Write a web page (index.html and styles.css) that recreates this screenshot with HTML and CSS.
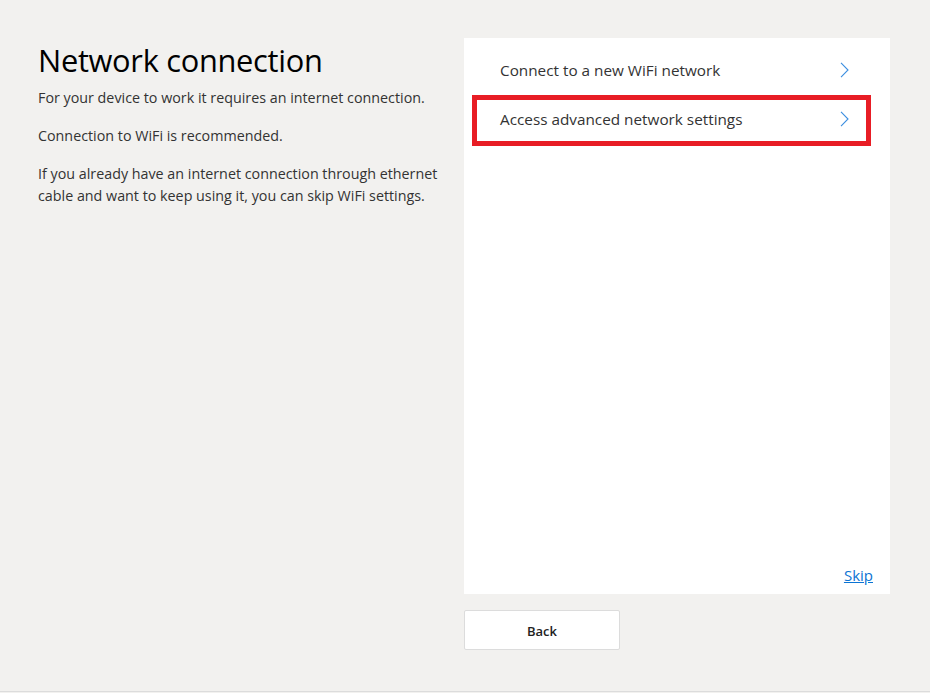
FILE: index.html
```html
<!DOCTYPE html>
<html lang="en">
<head>
<meta charset="utf-8">
<title>Network connection</title>
<link rel="stylesheet" href="styles.css">
</head>
<body>
<div class="page">
  <section class="intro">
    <h1 class="title">Network connection</h1>
    <p class="text first">For your device to work it requires an internet connection.</p>
    <p class="text">Connection to WiFi is recommended.</p>
    <p class="text">If you already have an internet connection through ethernet cable and want to keep using it, you can skip WiFi settings.</p>
  </section>
  <section class="side">
    <div class="panel">
      <ul class="options">
        <li class="option"><span class="label">Connect to a new WiFi network</span>
          <svg class="chev" width="9" height="16" viewBox="0 0 9 16"><path d="M1 0.8 L8 8 L1 15.2" fill="none" stroke="#3b8ee0" stroke-width="1.1"/></svg>
        </li>
        <li class="option highlighted"><span class="label">Access advanced network settings</span>
          <svg class="chev" width="9" height="16" viewBox="0 0 9 16"><path d="M1 0.8 L8 8 L1 15.2" fill="none" stroke="#3b8ee0" stroke-width="1.1"/></svg>
        </li>
      </ul>
      <div class="footer"><a class="skip" href="#">Skip</a></div>
    </div>
    <button class="back" type="button">Back</button>
  </section>
</div>
</body>
</html>
```
FILE: styles.css
```css
html, body {
  margin: 0;
  padding: 0;
}
body {
  background: #f2f1ef;
  font-family: "Open Sans", "Noto Sans", sans-serif;
  color: #2b2b2b;
}
.page {
  height: 692px;
  border-bottom: 1px solid #dcdcdc;
  display: flex;
  padding: 38px 0 0 38px;
  box-sizing: border-box;
  gap: 21px;
}
.intro {
  width: 405px;
}
.title {
  margin: 0;
  font-size: 30.8px;
  font-weight: 400;
  line-height: 44px;
  color: #000;
  letter-spacing: -0.3px;
}
.text {
  margin: 16px 0 0;
  font-size: 14.3px;
  line-height: 22px;
  color: #333;
}
.text.first {
  margin-top: 5px;
}
.side {
  width: 426px;
  display: flex;
  flex-direction: column;
  gap: 16px;
}
.panel {
  background: #fff;
  height: 556px;
  display: flex;
  flex-direction: column;
  padding-top: 7px;
  box-sizing: border-box;
}
.options {
  list-style: none;
  margin: 0;
  padding: 0;
}
.option {
  position: relative;
  height: 49px;
  display: flex;
  align-items: center;
  justify-content: space-between;
  padding: 0 41px 0 36px;
  font-size: 15.3px;
  color: #333;
}
.chev {
  display: block;
  margin-top: 1px;
}
.highlighted::after {
  content: "";
  position: absolute;
  top: 1px;
  bottom: -3px;
  left: 8px;
  right: 19px;
  border: 5px solid #e81d25;
}
.footer {
  margin-top: auto;
  display: flex;
  justify-content: flex-end;
  padding: 0 17px 9px 0;
}
.skip {
  font-size: 15px;
  color: #0b74d4;
  text-decoration: underline;
}
.back {
  width: 156px;
  height: 40px;
  background: #fff;
  border: 1px solid #dcdcdc;
  border-radius: 2px;
  font-family: "Open Sans", "Noto Sans", sans-serif;
  font-size: 13px;
  font-weight: 600;
  color: #222;
  padding: 1px 0 0;
}
```
